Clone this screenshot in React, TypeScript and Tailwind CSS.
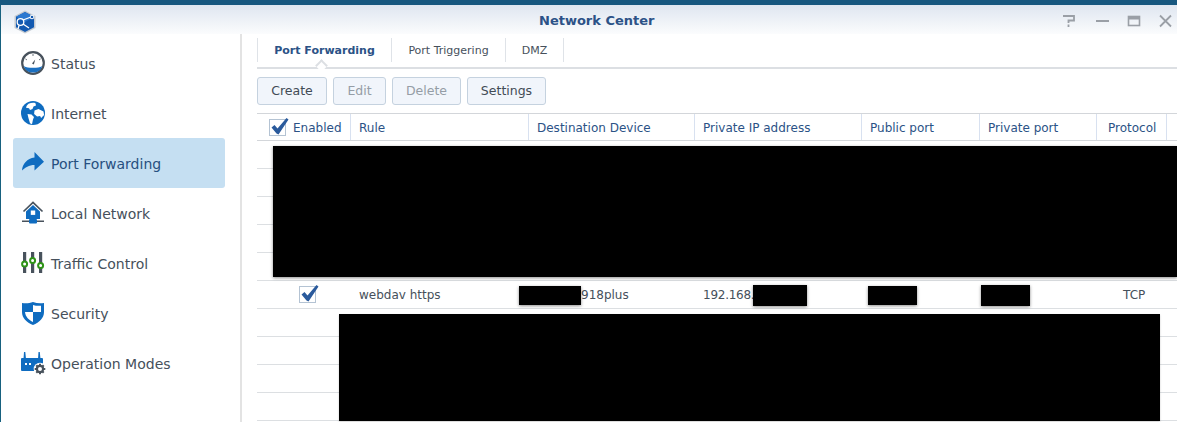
import React from "react";

const font = { fontFamily: '"DejaVu Sans", Verdana, sans-serif' };

function Logo() {
  return (
    <svg width="24" height="24" viewBox="0 0 24 24">
      <path d="M12 .5 22.5 6v12L12 23.500 1.500 18V6Z" fill="#c3c9d0" />
      <path d="M12 2 21 6.800v10.400L12 22 3 17.200V6.800Z" fill="#1259b0" />
      <path d="M12 2 21 6.800 12 12 3 6.800Z" fill="#2a78d0" />
      <g stroke="#fff" strokeWidth="1.300" fill="none">
        <circle cx="7.500" cy="12" r="3.300" />
        <path d="M10 10 18 7M10 14 16 18M6 15.500 5 19" />
      </g>
      <circle cx="19" cy="7" r="2.200" fill="#fff" />
      <circle cx="19" cy="7" r="1.300" fill="#1259b0" />
    </svg>
  );
}

function StatusIcon() {
  return (
    <svg width="24" height="24" viewBox="0 0 24 24">
      <circle cx="12" cy="12" r="10.800" fill="#fff" stroke="#48525c" strokeWidth="2.200" />
      <path d="M2.600 15a10 10 0 0 0 18.800 0c-3 1.500-5 1.800-9.400 1.800S5.600 16.500 2.600 15Z" fill="#1a6fc0" />
      <path d="M14.200 8.500 11 12.600 12.900 13.500Z" fill="#48525c" />
      <path d="M12 3.200v1.600M4.500 8l1.300.8M19.500 8l-1.300.8" stroke="#48525c" strokeWidth="1" />
    </svg>
  );
}

function GlobeIcon() {
  return (
    <svg width="24" height="24" viewBox="0 0 24 24">
      <circle cx="12" cy="12" r="12" fill="#0f6cc0" />
      <path d="M7.500 2.800c2.500-1 5-1.200 7-.6l.5 2.300-2.500 1-1 2.500-2.500 1-1-1.800-3-.4C5.500 5.200 6 4 7.500 2.800Z" fill="#fff" />
      <path d="M13.500 9.500l4-1.500 5 2.500.6 3.500-3 3-1-2-3 .5-3-2.500Z" fill="#fff" />
      <path d="M6.500 13l4 .5 2.500 2.500-1 2.500-1 4.700-2-1-1.500-5Z" fill="#fff" />
    </svg>
  );
}

function ArrowIcon() {
  return (
    <svg width="24" height="24" viewBox="0 0 24 24">
      <path d="M13.500 1 23 10.800 13.500 19.500v-5.500C8 14 4 16.500 1 19.500c.5-6.500 5-12 12.500-13Z" fill="#0f6cc0" />
    </svg>
  );
}

function HomeIcon() {
  return (
    <svg width="24" height="24" viewBox="0 0 24 24">
      <path d="M2.500 10.500 12 1.500l9.500 9" fill="none" stroke="#48525c" strokeWidth="1.700" />
      <path d="M12 4 5 10.500V18h14v-7.500Z" fill="#0f6cc0" />
      <rect x="9.800" y="9.500" width="4.400" height="4.400" fill="#fff" />
      <rect x="1" y="19.500" width="22" height="1.500" fill="#48525c" />
      <rect x="8" y="18" width="8" height="4.500" rx="1" fill="#0f6cc0" />
    </svg>
  );
}

function SlidersIcon() {
  return (
    <svg width="24" height="24" viewBox="0 0 24 24">
      <g fill="#48525c">
        <rect x="2" y="1" width="3.200" height="21" />
        <rect x="10" y="1" width="3.200" height="21" />
        <rect x="18" y="1" width="3.200" height="21" />
      </g>
      <g fill="#fff" stroke="#2f9417" strokeWidth="2">
        <circle cx="3.600" cy="13" r="2.500" />
        <circle cx="11.600" cy="9.500" r="2.500" />
        <circle cx="19.600" cy="14.500" r="2.500" />
      </g>
    </svg>
  );
}

function ShieldIcon() {
  return (
    <svg width="24" height="24" viewBox="0 0 24 24">
      <path d="M1 2c4 .5 7.500.3 11-1 3.500 1.300 7 1.500 11 1v9c0 6-4.500 10.500-11 13C5.500 21.500 1 17 1 11Z" fill="#0f6cc0" />
      <path d="M12 4c2.500.8 5 1 8 .8V11h-8ZM12 11v10c-4-2-7.500-5-8-10Z" fill="#fff" />
    </svg>
  );
}

function ModesIcon() {
  return (
    <svg width="26" height="24" viewBox="0 0 26 24">
      <path d="M3 1h1.300l.7 7H2.500ZM17.500 1h1.300l.7 7h-2.500Z" fill="#0f6cc0" />
      <rect x="0" y="7" width="22" height="13" rx="1" fill="#0f6cc0" />
      <rect x="4" y="12" width="2" height="2" fill="#fff" />
      <rect x="8" y="12" width="2" height="2" fill="#fff" />
      <circle cx="19" cy="18" r="6.300" fill="#fff" />
      <circle cx="19" cy="18" r="3.100" fill="none" stroke="#48525c" strokeWidth="2.200" />
      <path d="M19 12.700v2M19 21.300v2M13.700 18h2M22.300 18h2M15.300 14.300l1.400 1.400M21.300 20.300l1.400 1.400M22.700 14.300l-1.400 1.400M16.700 20.300l-1.400 1.400" stroke="#48525c" strokeWidth="2" />
    </svg>
  );
}

function Check() {
  return (
    <div className="relative h-[17px] w-[17px] border border-[#b4c3d3] bg-white">
      <svg className="absolute -left-px -top-[3px]" width="21" height="19" viewBox="0 0 21 19">
        <path d="M2.500 10.500 5.500 8 8.500 11.500 17.500 1 19.500 2.500 9.500 17.500 7.500 16.500Z" fill="#2a5a9c" />
      </svg>
    </div>
  );
}

const nav = [
  { label: "Status", icon: <StatusIcon /> },
  { label: "Internet", icon: <GlobeIcon /> },
  { label: "Port Forwarding", icon: <ArrowIcon />, active: true },
  { label: "Local Network", icon: <HomeIcon /> },
  { label: "Traffic Control", icon: <SlidersIcon /> },
  { label: "Security", icon: <ShieldIcon /> },
  { label: "Operation Modes", icon: <ModesIcon /> },
];

const cols = "grid grid-cols-[94px_178px_166px_167px_118px_117px_70px_1fr]";

const headers = [
  { t: "Rule", cls: "pl-[8px]" },
  { t: "Destination Device", cls: "pl-[8px]" },
  { t: "Private IP address", cls: "pl-[8px]" },
  { t: "Public port", cls: "pl-[8px]" },
  { t: "Private port", cls: "pl-[8px]" },
  { t: "Protocol", cls: "pl-[11px]" },
];

function Btn({ children, disabled, w }: { children: React.ReactNode; disabled?: boolean; w: string }) {
  return (
    <div
      className={`flex h-[28px] items-center justify-center rounded-[3px] border border-[#c5d2df] bg-[#f1f5fb] pt-px text-[12.5px] ${w} ${
        disabled ? "text-[#959da6]" : "text-[#414b55]"
      }`}
    >
      {children}
    </div>
  );
}

export default function App() {
  return (
    <div className="relative h-[422px] w-[1177px] overflow-hidden bg-white" style={font}>
      <div className="h-[5px] bg-[#17577f]" />
      <div className="flex h-[417px] border-l border-[#17617f]">
        <div className="flex w-[239px] shrink-0 flex-col">
          <div className="flex h-[29px] items-start bg-gradient-to-b from-[#dfe6f0] to-[#fbfcfd] pl-[12px] pt-[5px]">
            <Logo />
          </div>
          <div className="flex flex-1 flex-col px-[12px] pt-[4px]">
            {nav.map((n) => (
              <div
                key={n.label}
                className={`flex h-[50px] w-[212px] items-center gap-[8px] rounded-[3px] pl-[8px] text-[14px] ${
                  n.active ? "bg-[#c5dff2] text-[#274f80]" : "text-[#46505b]"
                }`}
              >
                <div className="flex w-[26px] shrink-0 justify-start">{n.icon}</div>
                <span className="-ml-[4px] pt-[2px]">{n.label}</span>
              </div>
            ))}
          </div>
        </div>
        <div className="flex min-w-0 flex-1 flex-col">
          <div className="relative flex h-[29px] items-center bg-gradient-to-b from-[#dfe6f0] to-[#fbfcfd]">
            <div className="absolute left-[299px] top-[6px] text-[13px] font-bold text-[#2c5287]">Network Center</div>
            <div className="ml-auto mr-[3px] flex items-center gap-[17px] pt-[3px]">
              <svg width="16" height="14" viewBox="0 0 16 14" fill="none" stroke="#9a9fa6" strokeWidth="1.800">
                <path d="M2 2h11v4.500H7.500V9M7.500 10.500V13" />
              </svg>
              <svg width="16" height="14" viewBox="0 0 16 14" fill="none" stroke="#9a9fa6" strokeWidth="2">
                <path d="M2 7h13" />
              </svg>
              <svg width="14" height="14" viewBox="0 0 14 14" fill="none" stroke="#9a9fa6">
                <rect x="1.500" y="2.500" width="11" height="9" strokeWidth="1.600" />
                <path d="M1 4h12" strokeWidth="3" />
              </svg>
              <svg width="16" height="14" viewBox="0 0 16 14" fill="none" stroke="#9a9fa6" strokeWidth="1.800">
                <path d="M2 1.500 13 12.500M13 1.500 2 12.500" />
              </svg>
            </div>
          </div>
          <div className="flex flex-1">
            <div className="w-[17px] shrink-0 border-l-2 border-[#e3e3e3]" />
            <div className="flex min-w-0 flex-1 flex-col">
              <div className="relative mt-[4px] flex h-[31px] items-start border-b-2 border-[#dcdfe3] text-[11px] text-[#46505b]">
                <div className="flex h-[24px] w-[135px] items-center justify-center border-x border-[#dfe3e8] pt-[2px] font-bold text-[#2b5286]">
                  Port Forwarding
                </div>
                <div className="flex h-[24px] w-[114px] items-center justify-center border-r border-[#dfe3e8] pt-[2px]">
                  Port Triggering
                </div>
                <div className="flex h-[24px] w-[58px] items-center justify-center border-r border-[#dfe3e8] pt-[2px]">
                  DMZ
                </div>
                <div className="absolute left-[60px] top-[23px] h-[9px] w-[9px] rotate-45 border-l-2 border-t-2 border-[#dcdfe3] bg-white" />
              </div>
              <div className="flex gap-[6px] pt-[8px]">
                <Btn w="w-[70px]">Create</Btn>
                <Btn w="w-[53px]" disabled>
                  Edit
                </Btn>
                <Btn w="w-[69px]" disabled>
                  Delete
                </Btn>
                <Btn w="w-[79px]">Settings</Btn>
              </div>
              <div className="mt-[8px]">
                <div className={`${cols} h-[28px] border-y border-[#d3d6da] text-[12px] text-[#2b5286]`}>
                  <div className="flex items-center gap-[7px] border-r border-[#d8e1f0] pl-[12px]">
                    <Check />
                    <span className="pt-px">Enabled</span>
                  </div>
                  {headers.map((h) => (
                    <div key={h.t} className={`flex items-center border-r border-[#d8e1f0] pt-px ${h.cls}`}>
                      {h.t}
                    </div>
                  ))}
                  <div />
                </div>
                {Array.from({ length: 10 }).map((_, i) =>
                  i === 5 ? (
                    <div key={i} className={`${cols} h-[28px] items-center border-b border-[#dcdfe2] text-[12px] text-[#46505b]`}>
                      <div className="flex justify-center pl-[6px]">
                        <Check />
                      </div>
                      <div className="pl-[8px] pt-px">webdav https</div>
                      <div className="pl-[52px] pt-px">918plus</div>
                      <div className="pl-[8px] pt-px tracking-[-0.25px]">192.168.</div>
                      <div />
                      <div />
                      <div className="pl-[26px] pt-px">TCP</div>
                      <div />
                    </div>
                  ) : (
                    <div key={i} className="h-[28px] border-b border-[#dcdfe2]" />
                  ),
                )}
              </div>
            </div>
          </div>
        </div>
      </div>
      <div className="absolute left-[273px] top-[146px] h-[131px] w-[904px] bg-black shadow-[0_1px_3px_rgba(0,0,0,0.45)]" />
      <div className="absolute left-[339px] top-[314px] h-[107px] w-[821px] bg-black shadow-[0_1px_2px_rgba(0,0,0,0.2)]" />
      <div className="absolute left-[519px] top-[286px] h-[19px] w-[62px] bg-black shadow-[0_1px_3px_rgba(0,0,0,0.45)]" />
      <div className="absolute left-[753px] top-[285px] h-[21px] w-[54px] bg-black shadow-[0_1px_3px_rgba(0,0,0,0.45)]" />
      <div className="absolute left-[868px] top-[286px] h-[19px] w-[49px] bg-black shadow-[0_1px_3px_rgba(0,0,0,0.45)]" />
      <div className="absolute left-[981px] top-[285px] h-[21px] w-[49px] bg-black shadow-[0_1px_3px_rgba(0,0,0,0.45)]" />
    </div>
  );
}
